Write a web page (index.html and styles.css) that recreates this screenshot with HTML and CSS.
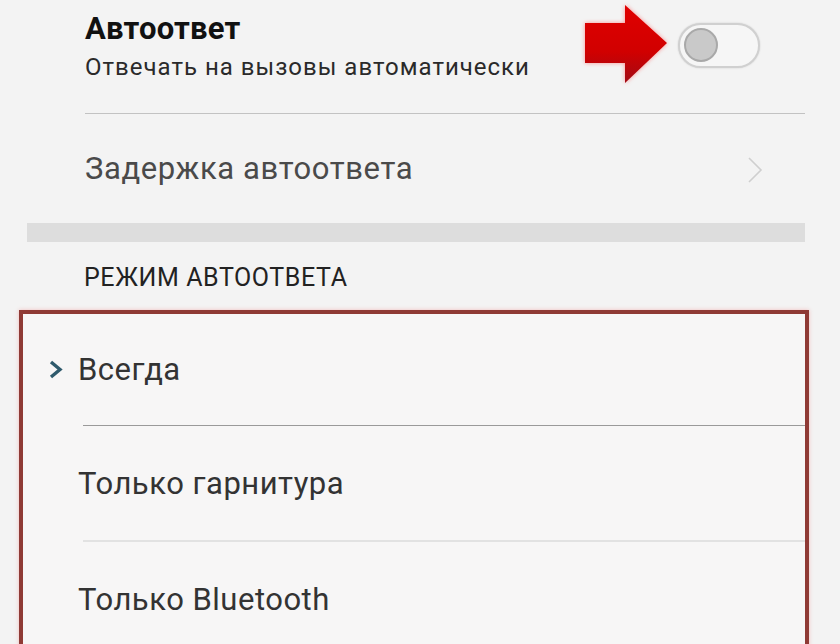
FILE: index.html
```html
<!DOCTYPE html>
<html lang="ru">
<head>
    <meta charset="UTF-8">
    <meta name="viewport" content="width=device-width, initial-scale=1.0">
    <title>Автоответ</title>
    <link rel="stylesheet" href="styles.css">
</head>
<body>
    <div class="screen">
        <div class="setting">
            <div class="setting-text">
                <div class="setting-title">Автоответ</div>
                <div class="setting-sub">Отвечать на вызовы автоматически</div>
            </div>
            <div class="switch">
                <div class="knob"></div>
            </div>
            <!-- стрелка-указатель поверх экрана -->
            <svg class="arrow" width="90" height="84" viewBox="0 0 90 84">
                <defs>
                    <linearGradient id="red" x1="0" y1="0" x2="0" y2="1">
                        <stop offset="0" stop-color="#e00000"/>
                        <stop offset="0.6" stop-color="#d10000"/>
                        <stop offset="1" stop-color="#a10a14"/>
                    </linearGradient>
                </defs>
                <path d="M4 23 H44 V5 L86 43 L44 83 V63 H4 Z" fill="url(#red)"/>
            </svg>
        </div>
        <div class="divider"></div>
        <div class="link-row">
            <span>Задержка автоответа</span>
            <svg class="chevron" width="16" height="28" viewBox="0 0 16 28">
                <path d="M2 2 L14 14 L2 26" fill="none" stroke="#cfcfcf" stroke-width="1.6"/>
            </svg>
        </div>
        <div class="band"></div>
        <div class="section-title">РЕЖИМ АВТООТВЕТА</div>
        <div class="options">
            <div class="option">
                <span class="mark">
                    <svg width="15" height="19" viewBox="0 0 15 19">
                        <path d="M3 2 L12 9.5 L3 17" fill="none" stroke="#2f5a6c" stroke-width="3.4"/>
                    </svg>
                </span>
                <span>Всегда</span>
            </div>
            <div class="option-line"></div>
            <div class="option">
                <span class="mark"></span>
                <span>Только гарнитура</span>
            </div>
            <div class="option-line light"></div>
            <div class="option">
                <span class="mark"></span>
                <span>Только Bluetooth</span>
            </div>
        </div>
    </div>
</body>
</html>
```

FILE: styles.css
```css
body {
    margin: 0;
    background-color: #f3f3f3;
    font-family: Roboto, 'Liberation Sans', sans-serif;
}
.screen {
    width: 840px;
    height: 644px;
    overflow: hidden;
}
.setting {
    position: relative;
    display: flex;
    justify-content: space-between;
    align-items: center;
    height: 113px;
    padding: 0 80px 0 85px;
    box-sizing: border-box;
}
.setting-text {
    margin-top: -22px;
}
.setting-title {
    font-size: 31px;
    font-weight: bold;
    line-height: 36px;
    color: #111;
    letter-spacing: 0.2px;
}
.setting-sub {
    margin-top: 6px;
    font-size: 24px;
    line-height: 28px;
    color: #2a2a2a;
    letter-spacing: 1px;
}
.switch {
    width: 74px;
    height: 41px;
    margin-top: -23px;
    border: 2px solid #d0d0d0;
    border-radius: 23px;
    background-color: #f6f6f6;
    display: flex;
    align-items: center;
    padding-left: 4px;
    box-sizing: content-box;
    box-shadow: 0 0 2px rgba(0, 0, 0, 0.15);
}
.knob {
    width: 30px;
    height: 30px;
    border-radius: 50%;
    background-color: #c9c9c9;
    border: 2px solid #a9a9a9;
}
.arrow {
    position: absolute;
    left: 581px;
    top: 0;
    filter: drop-shadow(0 0 2px rgba(255, 80, 80, 0.6));
}
.divider {
    margin: 0 35px 0 85px;
    border-top: 1px solid #c2c2c2;
}
.link-row {
    display: flex;
    justify-content: space-between;
    align-items: center;
    height: 109px;
    padding: 0 77px 0 85px;
    font-size: 31px;
    color: #4a4a4a;
    letter-spacing: 0.6px;
}
.chevron {
    margin-top: 2px;
}
.band {
    margin: 0 35px 0 27px;
    height: 19px;
    background-color: #dddddd;
}
.section-title {
    height: 68px;
    padding: 21px 0 0 84px;
    box-sizing: border-box;
    font-size: 25px;
    color: #222;
    letter-spacing: 0.6px;
}
.options {
    margin: 0 31px 0 19px;
    border: 4px solid #8f3a35;
    border-bottom: none;
    background-color: #f7f6f6;
    box-shadow: 0 0 4px rgba(240, 120, 120, 0.45);
    height: 400px;
}
.option {
    display: flex;
    align-items: center;
    height: 111px;
    padding-left: 25px;
    font-size: 31px;
    color: #333;
    letter-spacing: 0.5px;
}
.option + .option-line + .option {
    height: 114px;
}
.mark {
    width: 30px;
    display: flex;
    align-items: center;
}
.option-line {
    margin-left: 60px;
    border-top: 1px solid #9a9a9a;
}
.option-line.light {
    border-top: 2px solid #e2e2e2;
}
```
